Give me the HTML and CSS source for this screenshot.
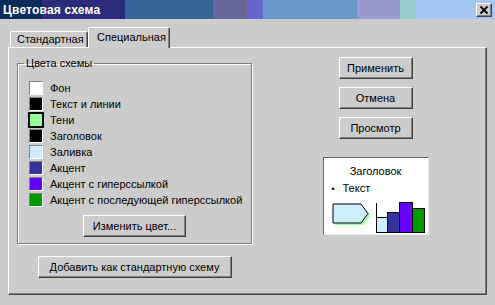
FILE: index.html
```html
<!DOCTYPE html>
<html lang="ru">
<head>
  <meta charset="utf-8">
  <title>Цветовая схема</title>
  <link rel="stylesheet" href="styles.css">
</head>
<body>
  <div class="window">
    <div class="titlebar">
      <span class="title">Цветовая схема</span>
      <div class="close">
        <svg width="14" height="12" viewBox="0 0 14 12">
          <path d="M3.5 2.5 L10.5 9.5 M10.5 2.5 L3.5 9.5" stroke="#000" stroke-width="1.8" fill="none"/>
        </svg>
      </div>
    </div>

    <div class="tabs">
      <div class="tab">Стандартная</div>
      <div class="tab active">Специальная</div>
    </div>

    <div class="panel">
      <div class="left">
        <fieldset class="group">
          <legend>Цвета схемы</legend>
          <ul class="colors">
            <li><span class="swatch sw-bg"></span>Фон</li>
            <li><span class="swatch sw-text"></span>Текст и линии</li>
            <li><span class="swatch sw-shadow selected"></span>Тени</li>
            <li><span class="swatch sw-title"></span>Заголовок</li>
            <li><span class="swatch sw-fill"></span>Заливка</li>
            <li><span class="swatch sw-accent"></span>Акцент</li>
            <li><span class="swatch sw-link"></span>Акцент с гиперссылкой</li>
            <li><span class="swatch sw-visited"></span>Акцент с последующей гиперссылкой</li>
          </ul>
          <div class="change-row">
            <div class="btn change">Изменить цвет...</div>
          </div>
        </fieldset>
        <div class="btn add">Добавить как стандартную схему</div>
      </div>

      <div class="right">
        <div class="btn side">Применить</div>
        <div class="btn side">Отмена</div>
        <div class="btn side">Просмотр</div>

        <div class="preview">
          <div class="pv-title">Заголовок</div>
          <div class="pv-text"><span class="bullet">•</span>Текст</div>
          <svg class="pv-art" width="96" height="34" viewBox="0 0 96 34">
            <polygon points="5,6 33,6 40,15.5 33,25 5,25" fill="#99ff99"/>
            <polygon points="3,4 31,4 38,13.5 31,23 3,23" fill="#cceeff" stroke="#000" stroke-width="1"/>
            <rect x="46.5" y="17.5" width="11" height="15" fill="#cceeff" stroke="#000"/>
            <rect x="57.5" y="12.5" width="12" height="20" fill="#333399" stroke="#000"/>
            <rect x="69.5" y="2.5" width="13" height="30" fill="#6600ff" stroke="#000"/>
            <rect x="82.5" y="8.5" width="12" height="24" fill="#009900" stroke="#000"/>
            <path d="M46.5 3 V32.5 H95" stroke="#000" fill="none"/>
          </svg>
        </div>
      </div>
    </div>
  </div>
</body>
</html>
```

FILE: styles.css
```css
* {
  box-sizing: border-box;
}

html, body {
  margin: 0;
  padding: 0;
  background: #cccccc;
  font-family: "Liberation Sans", Arial, sans-serif;
  font-size: 11px;
  color: #000;
}

.window {
  width: 495px;
  height: 305px;
  display: flex;
  flex-direction: column;
  overflow: hidden;
}

/* title bar */
.titlebar {
  height: 19px;
  display: flex;
  align-items: center;
  justify-content: space-between;
  padding: 0 3px 0 3px;
  background: linear-gradient(to right,
    #0b2b5b 0 42px,
    #2b2b7b 42px 125px,
    #336699 125px 213px,
    #666699 213px 247px,
    #6666cc 247px 263px,
    #6699cc 263px 357px,
    #9999cc 357px 400px,
    #99cccc 400px 416px,
    #a3c8f3 416px);
}

.title {
  color: #fff;
  font-weight: bold;
  font-size: 12px;
  letter-spacing: 0.2px;
}

.close {
  width: 16px;
  height: 14px;
  background: #cccccc;
  border: 1px solid;
  border-color: #fff #404040 #404040 #fff;
  box-shadow: inset -1px -1px 0 #808080;
  display: flex;
  align-items: center;
  justify-content: center;
}

.close svg {
  display: block;
}

/* tabs */
.tabs {
  height: 28px;
  display: flex;
  align-items: flex-end;
  padding-left: 10px;
}

.tab {
  height: 16px;
  line-height: 15px;
  padding-left: 6px;
  width: 78px;
  white-space: nowrap;
  border: 1px solid;
  border-bottom: none;
  border-color: #fff #404040 transparent #fff;
  border-radius: 2px 2px 0 0;
  box-shadow: inset -1px 0 0 #808080;
  background: #cccccc;
}

.tab.active {
  position: relative;
  z-index: 1;
  height: 21px;
  width: 82px;
  line-height: 19px;
  padding-left: 8px;
  margin-bottom: -1px;
}

/* panel */
.panel {
  margin: 0 8px;
  height: 248px;
  border: 1px solid;
  border-color: #fff #404040 #404040 #fff;
  box-shadow: inset -1px -1px 0 #808080;
  padding: 8px 0 0 8px;
  display: flex;
}

.left {
  width: 235px;
  display: flex;
  flex-direction: column;
  align-items: center;
}

.group {
  width: 235px;
  min-inline-size: 0;
  margin: 0;
  padding: 0 0 6px 6px;
  border: 1px solid #808080;
  box-shadow: inset 1px 1px 0 #fff, 1px 1px 0 #fff;
}

.group legend {
  padding: 0 2px;
  line-height: 14px;
}

.colors {
  list-style: none;
  margin: 0;
  padding: 10px 0 0 5px;
}

.colors li {
  height: 16px;
  display: flex;
  align-items: center;
  gap: 7px;
  white-space: nowrap;
}

.swatch {
  flex: none;
  width: 14px;
  height: 14px;
  border: 1px solid;
  border-color: #808080 #fff #fff #808080;
}

.swatch.selected {
  width: 16px;
  height: 16px;
  border: 2px solid #000;
  margin: 0 -1px;
}

.sw-bg { background: #ffffff; }
.sw-text { background: #000000; }
.sw-shadow { background: #99ff99; }
.sw-title { background: #000000; }
.sw-fill { background: #cceeff; }
.sw-accent { background: #333399; }
.sw-link { background: #6600ff; }
.sw-visited { background: #009900; }

.change-row {
  display: flex;
  justify-content: center;
  padding-right: 6px;
  margin-top: 7px;
}

/* buttons */
.btn {
  height: 22px;
  display: flex;
  align-items: center;
  justify-content: center;
  background: #cccccc;
  border: 1px solid;
  border-color: #fff #404040 #404040 #fff;
  box-shadow: inset -1px -1px 0 #808080;
  white-space: nowrap;
}

.btn.change {
  width: 103px;
}

.btn.add {
  width: 194px;
  margin-top: 12px;
}

.right {
  flex: 1;
  margin-left: 13px;
  padding-top: 1px;
  display: flex;
  flex-direction: column;
  align-items: center;
  gap: 8px;
}

.btn.side {
  width: 74px;
}

/* preview */
.preview {
  margin-top: 10px;
  width: 106px;
  height: 78px;
  background: #fff;
  border: 1px solid;
  border-color: #666 #eee #eee #666;
  padding-top: 6px;
}

.pv-title {
  text-align: center;
  line-height: 14px;
}

.pv-text {
  line-height: 14px;
  margin-top: 3px;
  padding-left: 8px;
}

.bullet {
  display: inline-block;
  width: 11px;
  font-size: 9px;
}

.pv-art {
  display: block;
  margin: 4px 0 0 6px;
}
```
